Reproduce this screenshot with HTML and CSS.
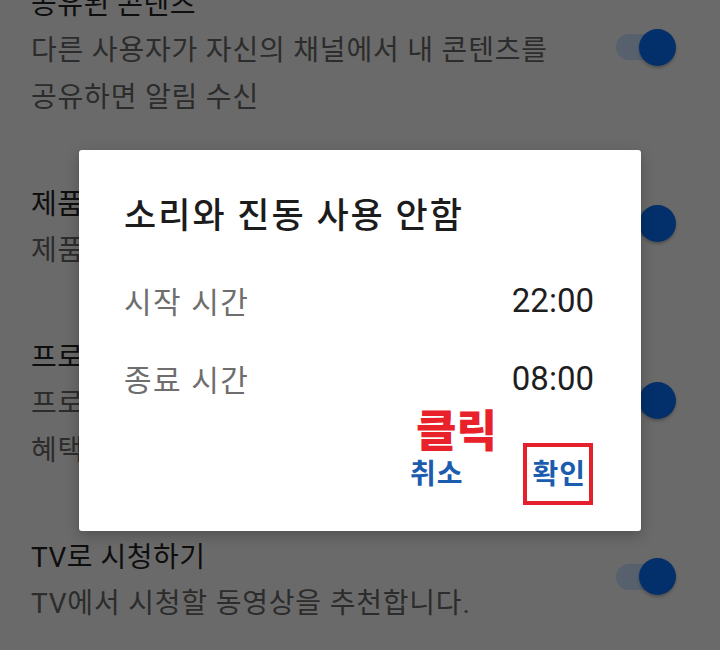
FILE: index.html
```html
<!DOCTYPE html>
<html lang="ko">
<head>
<meta charset="utf-8">
<title>알림 설정</title>
<link rel="stylesheet" href="styles.css">
</head>
<body>
<div class="screen">
  <div class="list">
    <div class="item">
      <div class="texts">
        <div class="title">공유된 콘텐츠</div>
        <div class="sub">다른 사용자가 자신의 채널에서 내 콘텐츠를<br>공유하면 알림 수신</div>
      </div>
      <div class="toggle"><span class="track"></span><span class="knob"></span></div>
    </div>
    <div class="item">
      <div class="texts">
        <div class="title">제품 업데이트</div>
        <div class="sub">제품 관련 공지사항 및 업데이트</div>
      </div>
      <div class="toggle"><span class="track"></span><span class="knob"></span></div>
    </div>
    <div class="item">
      <div class="texts">
        <div class="title">프로모션</div>
        <div class="sub">프로모션 콘텐츠 및 특가 행사 등의<br>혜택 관련 알림 수신</div>
      </div>
      <div class="toggle"><span class="track"></span><span class="knob"></span></div>
    </div>
    <div class="item">
      <div class="texts">
        <div class="title">TV로 시청하기</div>
        <div class="sub">TV에서 시청할 동영상을 추천합니다.</div>
      </div>
      <div class="toggle"><span class="track"></span><span class="knob"></span></div>
    </div>
  </div>

  <div class="dialog">
    <div class="dlg-title">소리와 진동 사용 안함</div>
    <div class="row"><span class="label">시작 시간</span><span class="time">22:00</span></div>
    <div class="row"><span class="label">종료 시간</span><span class="time">08:00</span></div>
    <div class="actions">
      <span class="btn">취소</span>
      <span class="btn btn-ok">확인</span>
    </div>
    <div class="note">클릭</div>
  </div>
</div>
</body>
</html>
```

FILE: styles.css
```css
html, body {
  margin: 0;
  padding: 0;
}
body {
  background: #6a6a6a;
  font-family: Roboto, "Noto Sans CJK KR", sans-serif;
}
.screen {
  position: relative;
  width: 720px;
  height: 650px;
  overflow: hidden;
  background: #6a6a6a;
}
.list {
  margin-top: -48px;
  display: flex;
  flex-direction: column;
}
.item {
  display: flex;
  align-items: center;
  padding: 31px 44px 31px 31px;
}
.texts {
  flex: 1;
  min-width: 0;
}
.title {
  font-size: 28px;
  line-height: 44px;
  letter-spacing: 0.5px;
  color: #0e0e0e;
  white-space: nowrap;
}
.sub {
  font-size: 28px;
  line-height: 47px;
  letter-spacing: 0.8px;
  color: #2c2c2c;
  white-space: nowrap;
}
.toggle {
  display: flex;
  align-items: center;
  width: 60px;
  height: 37px;
  margin-bottom: 10px;
}
.track {
  width: 44px;
  height: 26px;
  border-radius: 13px;
  background: #57606d;
}
.knob {
  width: 37px;
  height: 37px;
  border-radius: 50%;
  background: #03306b;
  margin-left: -21px;
  box-shadow: 0 2px 3px rgba(0, 0, 0, 0.25);
}
.dialog {
  position: absolute;
  left: 79px;
  top: 150px;
  width: 562px;
  height: 381px;
  box-sizing: border-box;
  padding: 43px 47px 31px 45px;
  background: #ffffff;
  border-radius: 3px;
  box-shadow: 0 4px 14px rgba(0, 0, 0, 0.25);
  display: flex;
  flex-direction: column;
}
.dlg-title {
  font-size: 35px;
  line-height: 48px;
  font-weight: 500;
  letter-spacing: 2px;
  color: #1c1c1c;
  margin-bottom: 20px;
  white-space: nowrap;
}
.row {
  display: flex;
  justify-content: space-between;
  align-items: center;
  height: 78px;
}
.label {
  font-size: 30px;
  letter-spacing: 1.5px;
  color: #6e6e6e;
}
.time {
  font-family: Roboto, sans-serif;
  font-size: 33px;
  color: #1e1e1e;
}
.actions {
  margin-top: 33px;
  display: flex;
  justify-content: flex-end;
  gap: 69px;
  padding-right: 8px;
  height: 50px;
  align-items: center;
}
.btn {
  font-size: 28px;
  line-height: 50px;
  letter-spacing: 1px;
  font-weight: 700;
  color: #1b5cae;
}
.btn-ok {
  position: relative;
}
.btn-ok::after {
  content: "";
  position: absolute;
  left: -9px;
  right: -7px;
  top: -7px;
  bottom: -5px;
  border: 4px solid #e3202b;
}
.note {
  position: absolute;
  left: 337px;
  top: 260px;
  font-size: 44px;
  line-height: 44px;
  font-weight: 900;
  color: #e8212b;
}
```
